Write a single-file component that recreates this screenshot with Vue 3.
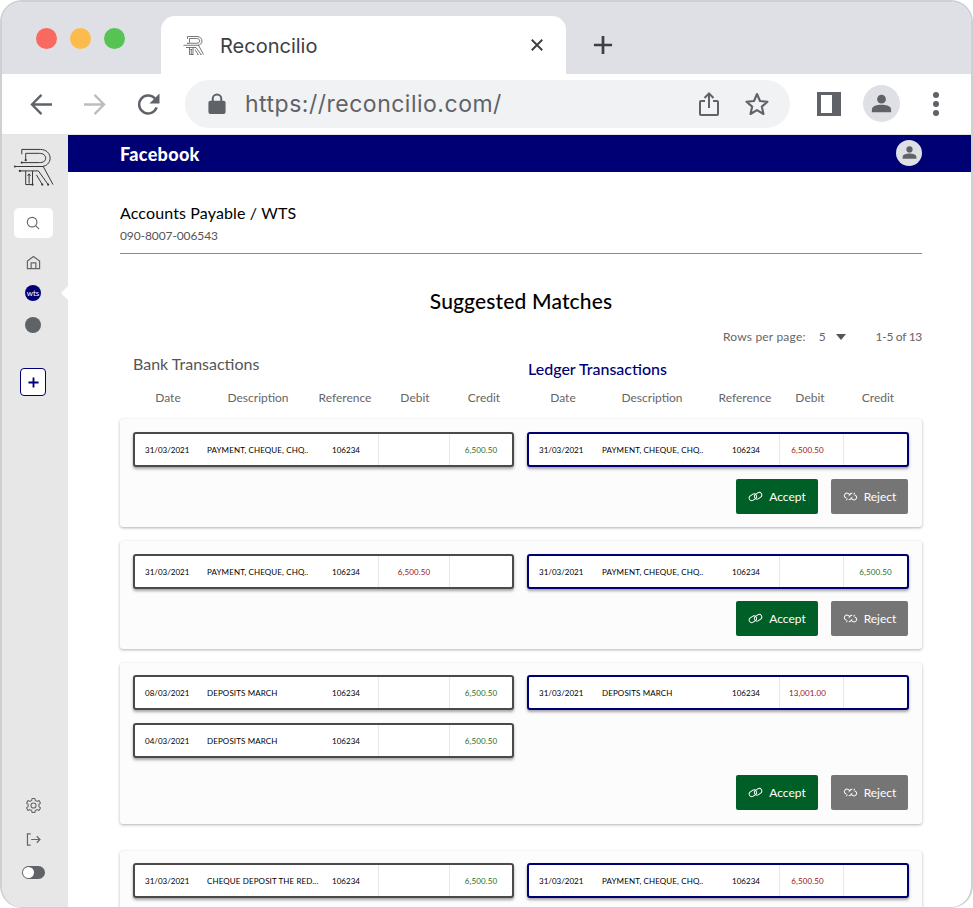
<script setup>
const logoPaths = [
  'M9 7V2H28C34 2 38 6 38 11C38 16 34 19 30 19.5',
  'M13 13V6H27C31 6 33.5 8 33.5 11C33.5 14 31 15.5 27 15.5H9',
  'M3 19.5H31L41 38',
  'M7 24H26L36 38',
  'M13 24V38H20V24',
  'M16.5 37V27M15 29L16.5 27L18 29',
  'M24 28L30 38'
]

const logoDots = [[2, 19.5], [9, 15.5], [13, 13], [7, 24], [30, 38], [36, 38], [20, 38]]

const cards = [
  {
    actions: true,
    bank: [{ date: '31/03/2021', desc: 'PAYMENT, CHEQUE, CHQ..', credit: '6,500.50' }],
    ledger: [{ date: '31/03/2021', desc: 'PAYMENT, CHEQUE, CHQ..', debit: '6,500.50' }]
  },
  {
    actions: true,
    bank: [{ date: '31/03/2021', desc: 'PAYMENT, CHEQUE, CHQ..', debit: '6,500.50' }],
    ledger: [{ date: '31/03/2021', desc: 'PAYMENT, CHEQUE, CHQ..', credit: '6,500.50' }]
  },
  {
    actions: true,
    tall: true,
    bank: [
      { date: '08/03/2021', desc: 'DEPOSITS MARCH', credit: '6,500.50' },
      { date: '04/03/2021', desc: 'DEPOSITS MARCH', credit: '6,500.50' }
    ],
    ledger: [{ date: '31/03/2021', desc: 'DEPOSITS MARCH', debit: '13,001.00' }]
  },
  {
    actions: false,
    bank: [{ date: '31/03/2021', desc: 'CHEQUE DEPOSIT THE RED...', credit: '6,500.50' }],
    ledger: [{ date: '31/03/2021', desc: 'PAYMENT, CHEQUE, CHQ..', debit: '6,500.50' }]
  }
]
</script>

<template>
  <div class="window">
    <div class="tabBar">
      <div class="lights">
        <span class="light red"></span>
        <span class="light yellow"></span>
        <span class="light green"></span>
      </div>
      <div class="tab">
        <svg class="favicon" viewBox="0 0 42 40" fill="none" stroke="#55575a" stroke-width="1.6">
          <path v-for="d in logoPaths" :key="d" :d="d" />
          <circle v-for="p in logoDots" :key="p.join()" :cx="p[0]" :cy="p[1]" r="1.2" fill="#55575a" stroke="none" />
        </svg>
        <span class="tabTitle">Reconcilio</span>
        <svg class="tabClose" viewBox="0 0 16 16" fill="none" stroke="#3c4043" stroke-width="2.2">
          <path d="M2 2L14 14M14 2L2 14" />
        </svg>
      </div>
      <svg class="newTab" viewBox="0 0 22 22" fill="none" stroke="#3c4043" stroke-width="3">
        <path d="M11 1V21M1 11H21" />
      </svg>
    </div>

    <div class="toolbar">
      <svg class="navIcon back" viewBox="0 0 24 24" fill="none" stroke="#5f6368" stroke-width="2.4">
        <path d="M23 12H2M12 2L2 12L12 22" />
      </svg>
      <svg class="navIcon forward" viewBox="0 0 24 24" fill="none" stroke="#bdbdbd" stroke-width="2.4">
        <path d="M1 12H22M12 2L22 12L12 22" />
      </svg>
      <svg class="navIcon reload" viewBox="0 0 24 24" fill="none" stroke="#5f6368" stroke-width="2.6">
        <path d="M20.5 15A9.4 9.4 0 1 1 18.5 5.5L21 8" />
        <path d="M23.5 0.5V11H13Z" fill="#5f6368" stroke="none" />
      </svg>
      <div class="omnibox">
        <svg class="lock" viewBox="0 0 18 22" fill="#5f6368">
          <path d="M2 8H3.5V6A5.5 5.5 0 0 1 14.5 6V8H16A2 2 0 0 1 18 10V20A2 2 0 0 1 16 22H2A2 2 0 0 1 0 20V10A2 2 0 0 1 2 8ZM5.6 8H12.4V6A3.4 3.4 0 0 0 5.6 6Z" />
        </svg>
        <span class="url">https://reconcilio.com/</span>
        <svg class="share" viewBox="0 0 20 24" fill="none" stroke="#5f6368" stroke-width="2">
          <path d="M6 9H2A1 1 0 0 0 1 10V22A1 1 0 0 0 2 23H18A1 1 0 0 0 19 22V10A1 1 0 0 0 18 9H14" />
          <path d="M10 16V2M5.5 6L10 1.5L14.5 6" />
        </svg>
        <svg class="star" viewBox="0 0 24 24" fill="none" stroke="#5f6368" stroke-width="2.1" stroke-linejoin="round">
          <path d="M12 2L15 9L22.5 9.7L16.8 14.6L18.5 22L12 18.1L5.5 22L7.2 14.6L1.5 9.7L9 9Z" />
        </svg>
      </div>
      <div class="panelIcon"><span></span></div>
      <div class="avatar">
        <svg viewBox="0 0 24 24" fill="#5f6368">
          <circle cx="12" cy="7" r="5" />
          <path d="M1 22V19C1 15 7 13.5 12 13.5S23 15 23 19V22Z" />
        </svg>
      </div>
      <div class="dots"><span></span><span></span><span></span></div>
    </div>

    <div class="app">
      <aside class="sidebar">
        <svg class="logo" viewBox="0 0 42 40" fill="none" stroke="#333" stroke-width="1">
          <path v-for="d in logoPaths" :key="d" :d="d" />
          <circle v-for="p in logoDots" :key="p.join()" :cx="p[0]" :cy="p[1]" r="1.1" fill="#333" stroke="none" />
        </svg>
        <div class="searchBox">
          <svg viewBox="0 0 16 16" fill="none" stroke="#666" stroke-width="1.3">
            <circle cx="7" cy="7" r="5.5" />
            <path d="M11 11L15 15" />
          </svg>
        </div>
        <svg class="home" viewBox="0 0 16 16" fill="none" stroke="#666" stroke-width="1.3">
          <path d="M1.5 6.5L8 1.5L14.5 6.5V14.5H1.5Z" />
          <path d="M5.5 14.5V8.5H10.5V14.5" />
        </svg>
        <div class="wts">wts</div>
        <div class="pointer"></div>
        <div class="grayDot"></div>
        <div class="addBtn">
          <svg viewBox="0 0 12 12" fill="none" stroke="#000075" stroke-width="2">
            <path d="M6 0.5V11.5M0.5 6H11.5" />
          </svg>
        </div>
        <div class="spacer"></div>
        <svg class="gear" viewBox="0 0 24 24" fill="none" stroke="#666" stroke-width="1.5" stroke-linejoin="round">
          <path d="M10 2H14L14.6 5L17 6.2L19.8 5L21.8 8.5L19.6 10.5V13.5L21.8 15.5L19.8 19L17 17.8L14.6 19L14 22H10L9.4 19L7 17.8L4.2 19L2.2 15.5L4.4 13.5V10.5L2.2 8.5L4.2 5L7 6.2L9.4 5Z" />
          <circle cx="12" cy="12" r="3.6" />
        </svg>
        <svg class="logout" viewBox="0 0 16 14" fill="none" stroke="#666" stroke-width="1.3">
          <path d="M5 1H1.5V13H5" />
          <path d="M5.5 7H15M11.5 3.5L15 7L11.5 10.5" />
        </svg>
        <div class="toggle"><span></span></div>
      </aside>

      <main class="main">
        <header class="topBar">
          <span class="company">Facebook</span>
          <div class="userBadge">
            <svg viewBox="0 0 24 24" fill="#5f6368">
              <circle cx="12" cy="7" r="5" />
              <path d="M1 22V19C1 15 7 13.5 12 13.5S23 15 23 19V22Z" />
            </svg>
          </div>
        </header>

        <div class="content">
          <div class="account">
            <div class="accountName">Accounts Payable / WTS</div>
            <div class="accountNo">090-8007-006543</div>
          </div>

          <h1 class="pageTitle">Suggested Matches</h1>

          <div class="pager">
            <span class="rowsLabel">Rows per page:</span>
            <span class="rowsNum">5</span>
            <span class="caret"></span>
            <span class="range">1-5 of 13</span>
          </div>

          <div class="sections">
            <div class="bankTitle">Bank Transactions</div>
            <div class="ledgerTitle">Ledger Transactions</div>
          </div>

          <div class="heads">
            <div class="head bankHead">
              <span>Date</span><span>Description</span><span>Reference</span><span>Debit</span><span>Credit</span>
            </div>
            <div class="head ledgerHead">
              <span>Date</span><span>Description</span><span>Reference</span><span>Debit</span><span>Credit</span>
            </div>
          </div>

          <div class="cards">
            <section v-for="(card, i) in cards" :key="i" class="card" :class="{ tall: card.tall }">
              <div class="pairs">
                <div class="stack">
                  <div v-for="(row, j) in card.bank" :key="j" class="row bankRow">
                    <span class="cell date">{{ row.date }}</span>
                    <span class="cell desc">{{ row.desc }}</span>
                    <span class="cell ref">106234</span>
                    <span class="cell amount debit">{{ row.debit }}</span>
                    <span class="cell amount credit">{{ row.credit }}</span>
                  </div>
                </div>
                <div class="stack">
                  <div v-for="(row, j) in card.ledger" :key="j" class="row ledgerRow">
                    <span class="cell date">{{ row.date }}</span>
                    <span class="cell desc">{{ row.desc }}</span>
                    <span class="cell ref">106234</span>
                    <span class="cell amount debit">{{ row.debit }}</span>
                    <span class="cell amount credit">{{ row.credit }}</span>
                  </div>
                </div>
              </div>
              <div v-if="card.actions" class="actions">
                <button class="btn accept">
                  <svg viewBox="0 0 16 12" fill="none" stroke="#fff" stroke-width="1">
                    <rect x="1" y="4" width="8.5" height="5.6" rx="2.8" transform="rotate(-35 5.2 7)" />
                    <rect x="6.5" y="2.4" width="8.5" height="5.6" rx="2.8" transform="rotate(-35 10.8 5)" />
                  </svg>
                  Accept
                </button>
                <button class="btn reject">
                  <svg viewBox="0 0 16 12" fill="none" stroke="#fff" stroke-width="1">
                    <rect x="1" y="3" width="8.5" height="5.6" rx="2.8" transform="rotate(35 5.2 6)" />
                    <rect x="6.5" y="3.4" width="8.5" height="5.6" rx="2.8" transform="rotate(35 10.8 6)" />
                    <path d="M2 11L14 1" stroke="#757575" stroke-width="2.6" />
                    <path d="M3 10L5 8.4M11 3.6L13 2" />
                  </svg>
                  Reject
                </button>
              </div>
            </section>
          </div>
        </div>
      </main>
    </div>
  </div>
</template>

<style scoped>
.window {
  width: 973px;
  height: 908px;
  box-sizing: border-box;
  border: 2px solid #cfd0d3;
  border-bottom-width: 1px;
  border-radius: 22px;
  overflow: hidden;
  display: flex;
  flex-direction: column;
  font-family: Lato, "Liberation Sans", sans-serif;
  color: #000;
  background: #fff;
}

.tabBar {
  height: 72px;
  flex: none;
  display: flex;
  align-items: flex-end;
  background: #dfe0e5;
}

.lights {
  width: 159px;
  height: 72px;
  box-sizing: border-box;
  padding: 26px 0 0 34px;
  display: flex;
  gap: 13px;
}

.light {
  width: 21px;
  height: 21px;
  border-radius: 50%;
}

.red { background: #f8695f; }
.yellow { background: #fcbc4d; }
.green { background: #56c353; }

.tab {
  width: 405px;
  height: 58px;
  box-sizing: border-box;
  padding: 0 22px 0 22px;
  display: flex;
  align-items: center;
  background: #fff;
  border-radius: 14px 14px 0 0;
}

.favicon {
  width: 21px;
  height: 21px;
}

.tabTitle {
  margin: 2px 0 0 16px;
  font-family: Inter, sans-serif;
  font-size: 20px;
  color: #3c4043;
  flex: 1;
}

.tabClose {
  width: 14px;
  height: 14px;
}

.newTab {
  width: 20px;
  height: 20px;
  margin: 0 0 19px 27px;
}

.toolbar {
  height: 61px;
  flex: none;
  display: flex;
  align-items: center;
  padding-left: 28px;
  box-sizing: border-box;
  border-bottom: 1px solid #e4e4e4;
}

.navIcon {
  width: 23px;
  height: 23px;
  flex: none;
}

.back { margin-right: 30px; }
.forward { margin-right: 31px; }
.reload { margin-right: 25px; }

.omnibox {
  width: 605px;
  height: 48px;
  margin-top: -1px;
  box-sizing: border-box;
  padding: 0 21px 0 23px;
  display: flex;
  align-items: center;
  border-radius: 24px;
  background: #f1f2f4;
}

.lock {
  width: 18px;
  height: 21px;
  flex: none;
}

.url {
  margin-left: 19px;
  font-family: Inter, sans-serif;
  font-size: 23px;
  letter-spacing: 0.5px;
  color: #5f6368;
  flex: 1;
}

.share {
  width: 20px;
  height: 24px;
  margin-right: 26px;
}

.star {
  width: 24px;
  height: 24px;
}

.panelIcon {
  width: 24px;
  height: 24px;
  margin: -1px 0 0 27px;
  box-sizing: border-box;
  border: 3px solid #5f6368;
  border-left-width: 4px;
  border-right-width: 9px;
  background: #fff;
}

.avatar {
  width: 37px;
  height: 37px;
  margin: -1px 0 0 22px;
  border-radius: 50%;
  background: #dfe0e5;
  display: flex;
  align-items: center;
  justify-content: center;
}

.avatar svg {
  width: 21px;
  height: 21px;
}

.dots {
  margin: -1px 0 0 33px;
  display: flex;
  flex-direction: column;
  gap: 3px;
}

.dots span {
  width: 6px;
  height: 6px;
  border-radius: 50%;
  background: #5f6368;
}

.app {
  flex: 1;
  min-height: 0;
  display: flex;
}

.sidebar {
  width: 66px;
  flex: none;
  position: relative;
  box-sizing: border-box;
  padding: 12px 4px 28px 0;
  display: flex;
  flex-direction: column;
  align-items: center;
  background: #e7e7e7;
}

.logo {
  width: 41px;
  height: 40px;
  flex: none;
}

.searchBox {
  width: 39px;
  height: 30px;
  margin-top: 21px;
  border-radius: 5px;
  background: #fff;
  display: flex;
  align-items: center;
  justify-content: center;
  flex: none;
}

.searchBox svg {
  width: 14px;
  height: 14px;
}

.home {
  width: 15px;
  height: 15px;
  margin-top: 17px;
  flex: none;
}

.wts {
  width: 16px;
  height: 16px;
  margin-top: 15px;
  border-radius: 50%;
  background: #000075;
  color: #fff;
  font-size: 8px;
  line-height: 16px;
  text-align: center;
  flex: none;
}

.pointer {
  position: absolute;
  right: 0;
  top: 151px;
  border-style: solid;
  border-width: 7px 7px 7px 0;
  border-color: transparent #fff transparent transparent;
}

.grayDot {
  width: 16px;
  height: 16px;
  margin-top: 16px;
  border-radius: 50%;
  background: #5f6368;
  flex: none;
}

.addBtn {
  width: 26px;
  height: 28px;
  margin-top: 35px;
  box-sizing: border-box;
  border: 1px solid #000075;
  border-radius: 4px;
  background: #fff;
  display: flex;
  align-items: center;
  justify-content: center;
  flex: none;
}

.addBtn svg {
  width: 11px;
  height: 11px;
}

.spacer {
  flex: 1;
}

.gear {
  width: 17px;
  height: 17px;
}

.logout {
  width: 15px;
  height: 13px;
  margin-top: 19px;
}

.toggle {
  width: 23px;
  height: 13px;
  margin-top: 20px;
  padding: 1px;
  box-sizing: border-box;
  border-radius: 7px;
  background: #5f6368;
}

.toggle span {
  display: block;
  width: 11px;
  height: 11px;
  border-radius: 50%;
  background: #fff;
}

.main {
  flex: 1;
  min-width: 0;
  overflow: hidden;
}

.topBar {
  height: 37px;
  box-sizing: border-box;
  padding: 0 49px 2px 52px;
  display: flex;
  align-items: center;
  justify-content: space-between;
  background: #000075;
}

.company {
  margin-top: 2px;
  color: #fff;
  font-size: 18px;
  font-weight: 900;
  letter-spacing: 0.3px;
}

.userBadge {
  width: 26px;
  height: 26px;
  border-radius: 50%;
  background: #dfe0e5;
  display: flex;
  align-items: center;
  justify-content: center;
}

.userBadge svg {
  width: 15px;
  height: 15px;
}

.content {
  padding: 31px 49px 0 52px;
}

.account {
  height: 50px;
  border-bottom: 1px solid #8a8a8a;
}

.accountName {
  font-size: 16px;
  line-height: 20px;
  letter-spacing: 0.13px;
}

.accountNo {
  margin-top: 5px;
  font-size: 12px;
  line-height: 16px;
  color: #555;
  letter-spacing: -0.1px;
}

.pageTitle {
  margin: 34px 0 0;
  font-size: 21px;
  font-weight: 500;
  line-height: 26px;
  letter-spacing: 0.15px;
  text-align: center;
}

.pager {
  margin-top: 15px;
  display: flex;
  justify-content: flex-end;
  align-items: center;
  font-size: 12px;
  line-height: 16px;
  color: #666;
}

.rowsLabel {
  letter-spacing: 0.2px;
}

.rowsNum {
  margin-left: 13px;
}

.caret {
  margin-left: 10px;
  border-style: solid;
  border-width: 6px 5.5px 0;
  border-color: #555 transparent transparent;
}

.range {
  margin-left: 30px;
  letter-spacing: -0.3px;
}

.sections {
  display: flex;
  margin-top: 9px;
  height: 26px;
}

.bankTitle {
  width: 408px;
  padding-left: 13px;
  box-sizing: border-box;
  font-size: 16px;
  line-height: 20px;
  color: #555;
}

.ledgerTitle {
  padding-top: 5px;
  font-size: 16px;
  font-weight: 500;
  line-height: 20px;
  color: #000075;
}

.heads {
  display: flex;
  margin-top: 10px;
  padding-left: 13px;
  font-size: 12px;
  line-height: 16px;
  color: #666;
}

.head {
  display: grid;
  text-align: center;
}

.bankHead {
  width: 382px;
  margin-right: 12px;
  grid-template-columns: 70px 110px 64px 76px 62px;
}

.ledgerHead {
  grid-template-columns: 72px 106px 80px 50px 86px;
}

.cards {
  margin-top: 13px;
  display: flex;
  flex-direction: column;
  gap: 14px;
}

.card {
  box-sizing: border-box;
  padding: 13px;
  border-radius: 3px;
  background: #fcfcfc;
  box-shadow: 0 1px 3px rgba(0, 0, 0, 0.3);
}

.card:last-child {
  padding-top: 12px;
}

.card.tall {
  margin-bottom: 13px;
  padding-top: 12px;
  padding-bottom: 14px;
}

.card.tall .stack {
  gap: 13px;
}

.card.tall .actions {
  margin-top: 17px;
}

.pairs {
  display: grid;
  grid-template-columns: 381px 382px;
  gap: 13px;
}

.stack {
  display: flex;
  flex-direction: column;
  gap: 14px;
}

.row {
  height: 35px;
  box-sizing: border-box;
  display: grid;
  align-items: center;
  border-radius: 3px;
  background: #fff;
  font-size: 8px;
  white-space: nowrap;
}

.bankRow {
  grid-template-columns: 72px 107px 64px 71px 1fr;
  border: 2px solid #4a4a4a;
  box-shadow: 0 2px 3px rgba(0, 0, 0, 0.35);
}

.ledgerRow {
  grid-template-columns: 72px 112px 66px 64px 1fr;
  border: 2px solid #000075;
  box-shadow: 0 2px 3px rgba(0, 0, 0, 0.35);
}

.ledgerRow .debit {
  padding-right: 8px;
}

.ledgerRow .desc {
  padding-left: 1px;
}

.cell {
  height: 100%;
  display: flex;
  align-items: center;
  color: #000;
}

.date {
  padding-left: 10px;
}

.desc {
  letter-spacing: 0.12px;
}

.ref {
  justify-content: center;
}

.amount {
  justify-content: center;
  box-sizing: border-box;
  border-left: 1px solid #e8e8e8;
  letter-spacing: 0.1px;
}

.debit {
  color: #9c0f17;
}

.credit {
  color: #17702f;
}

.actions {
  margin-top: 12px;
  padding-right: 1px;
  display: flex;
  justify-content: flex-end;
  gap: 13px;
}

.btn {
  height: 35px;
  padding: 0 0 1px;
  border: none;
  border-radius: 2px;
  color: #fff;
  font-family: inherit;
  font-size: 12px;
  display: flex;
  align-items: center;
  justify-content: center;
  gap: 6px;
}

.btn svg {
  width: 15px;
  height: 11px;
}

.accept {
  width: 82px;
  background: #005f27;
}

.reject {
  width: 77px;
  background: #757575;
}
</style>

<style>
html, body {
  background: #fff;
}
</style>
